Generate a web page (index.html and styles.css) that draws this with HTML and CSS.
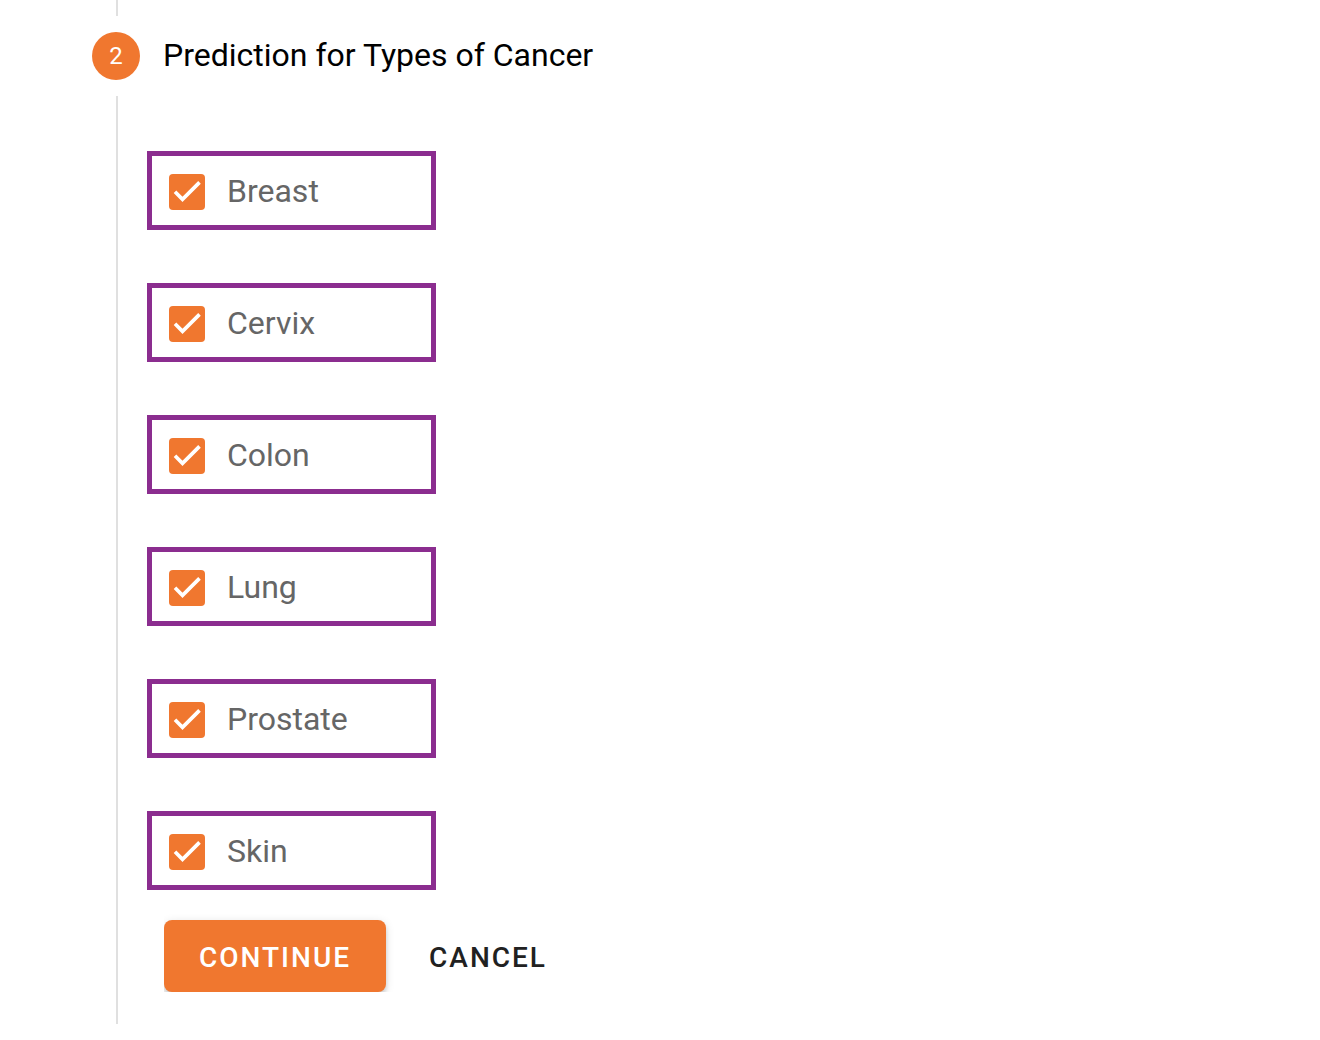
FILE: index.html
```html
<!DOCTYPE html>
<html lang="en">
<head>
<meta charset="utf-8">
<title>Prediction for Types of Cancer</title>
<link rel="stylesheet" href="styles.css">
</head>
<body>
<main class="stepper">
  <div class="connector"></div>
  <header class="step-header">
    <span class="step-number">2</span>
    <h1 class="step-title">Prediction for Types of Cancer</h1>
  </header>
  <form class="step-content">
    <div class="options">
      <label class="option"><input class="check" type="checkbox" checked>Breast</label>
      <label class="option"><input class="check" type="checkbox" checked>Cervix</label>
      <label class="option"><input class="check" type="checkbox" checked>Colon</label>
      <label class="option"><input class="check" type="checkbox" checked>Lung</label>
      <label class="option"><input class="check" type="checkbox" checked>Prostate</label>
      <label class="option"><input class="check" type="checkbox" checked>Skin</label>
    </div>
    <div class="actions">
      <button class="button button-primary" type="button">CONTINUE</button>
      <button class="button button-text" type="button">CANCEL</button>
    </div>
  </form>
</main>
</body>
</html>
```
FILE: styles.css
```css
* {
  box-sizing: border-box;
}

body {
  margin: 0;
  background: #fff;
  font-family: Roboto, "Liberation Sans", sans-serif;
}

.connector {
  width: 2px;
  height: 16px;
  margin-left: 116px;
  background: #e0e0e0;
}

.step-header {
  display: flex;
  align-items: flex-start;
  gap: 23px;
  padding: 16px 24px 16px 92px;
}

.step-number {
  flex: none;
  width: 48px;
  border-radius: 50%;
  background: #f0772f;
  color: #fff;
  font-size: 24px;
  line-height: 48px;
  text-align: center;
}

.step-title {
  margin: 0;
  color: #000;
  font-size: 32px;
  font-weight: 400;
  line-height: 46px;
}

.step-content {
  margin-left: 116px;
  padding: 55px 24px 32px 29px;
  border-left: 2px solid #e0e0e0;
}

.options {
  display: grid;
  grid-template-columns: minmax(0, 289px);
  gap: 53px;
}

.option {
  display: flex;
  align-items: flex-start;
  gap: 22px;
  padding: 18px 17px 15px;
  border: 5px solid #8b2d8f;
  color: #666;
  font-size: 32px;
  line-height: 34px;
}

.check {
  flex: none;
  appearance: none;
  width: 36px;
  height: 36px;
  margin: 0;
  border-radius: 4px;
  background: #f0772f url("data:image/svg+xml,%3Csvg xmlns='http://www.w3.org/2000/svg' viewBox='0 0 36 36'%3E%3Cpath d='M6 17.8l7.5 7.5L30.5 8.4' fill='none' stroke='white' stroke-width='3.7'/%3E%3C/svg%3E");
}

/* The row clips the button's shadow at its left and bottom edges. */
.actions {
  display: flex;
  gap: 8px;
  margin: 20px 0 0 17px;
  padding-top: 10px;
  overflow: hidden;
}

.button {
  height: 72px;
  padding: 2px 35px 0;
  border: 0;
  border-radius: 8px;
  font-family: inherit;
  font-size: 28px;
  font-weight: 500;
  letter-spacing: 2px;
}

.button-primary {
  background: #f0772f;
  box-shadow: 0 4px 4px rgba(0, 0, 0, 0.14), 0 2px 10px rgba(0, 0, 0, 0.12);
  color: #fff;
}

.button-text {
  background: transparent;
  color: #212121;
}
```
